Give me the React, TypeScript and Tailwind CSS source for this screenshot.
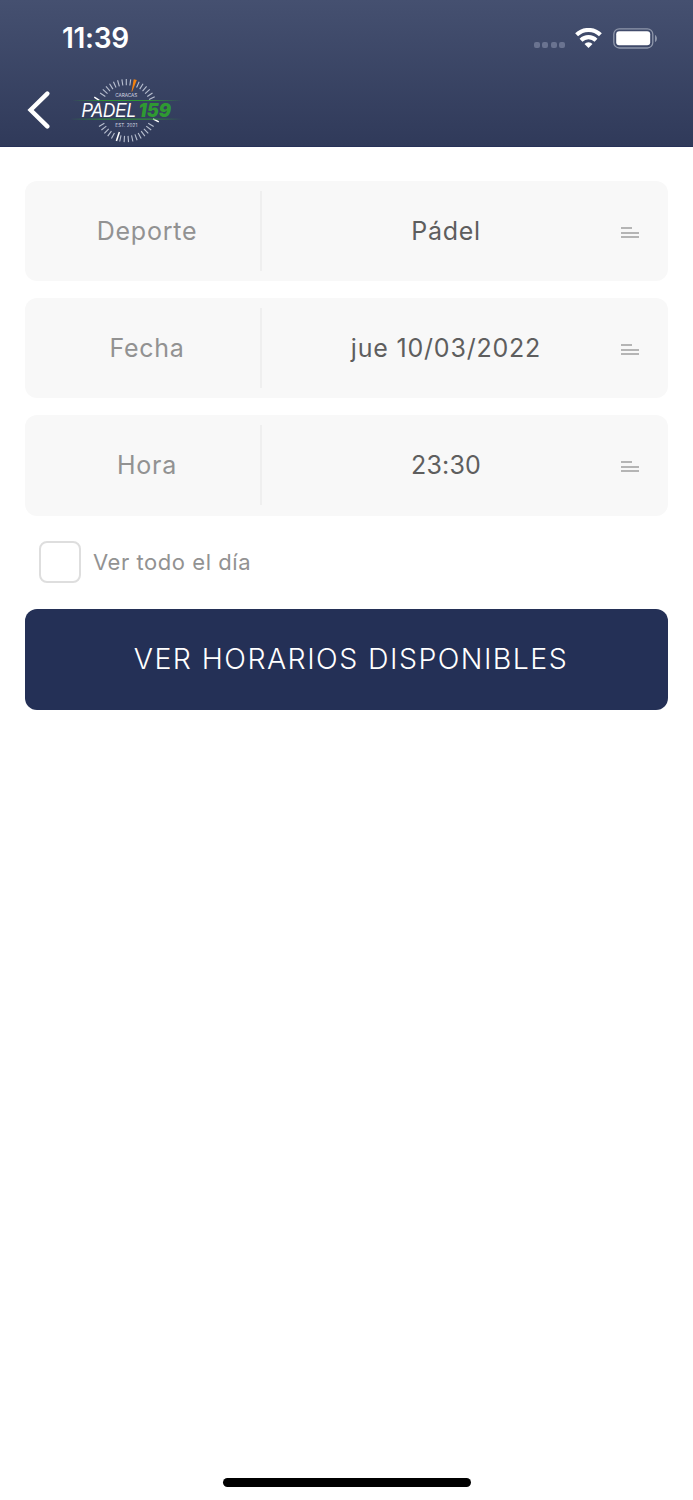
import React from 'react';

const fields = [
    { label: 'Deporte', value: 'Pádel', labelClass: 'tracking-[0.75px]', valueClass: 'tracking-[0.7px]' },
    { label: 'Fecha', value: 'jue 10/03/2022', labelClass: 'tracking-[0.75px]', valueClass: 'tracking-[0.8px]' },
    { label: 'Hora', value: '23:30', labelClass: 'tracking-[0.75px]', valueClass: 'tracking-[0.2px]' },
];

// dial marks every 8 degrees, the band behind the name is left free
const ticks = Array.from({ length: 45 }, (_, i) => i * 8).filter((a) => a !== 16 && (a <= 64 || (a >= 120 && a <= 240 && a !== 200) || a >= 300));

const Logo: React.FC = () => (
    <svg width="112" height="68" viewBox="70 77 112 68" className="ml-[20px] mt-[1px]">
        <defs>
            <linearGradient id="line" x1="0" x2="1">
                <stop offset="0" stopColor="#2f9a32" stopOpacity="0" />
                <stop offset="0.3" stopColor="#2f9a32" />
                <stop offset="0.7" stopColor="#2f9a32" />
                <stop offset="1" stopColor="#2f9a32" stopOpacity="0" />
            </linearGradient>
        </defs>
        {ticks.map((a) => (
            <line key={a} x1="126.3" y1="79" x2="126.3" y2="85.3" stroke="#b9c0d0" strokeWidth="1.1" transform={`rotate(${a} 126.3 110.6)`} />
        ))}
        <path d="M124.8 78.3h3.2l-1.3 12.7h-.6z" fill="#f5820f" transform="rotate(16 126.3 110.6)" />
        <path d="M126.3 142.6v-9.5" stroke="#fff" strokeWidth="1.5" transform="rotate(18 126.3 110.6)" />
        <path d="M94.3 97.2l5 3.1M153 118.8l5.8 3" stroke="#fff" strokeWidth="1.5" />
        <rect x="72" y="100" width="110" height="1" fill="url(#line)" />
        <rect x="70" y="118.6" width="112" height="1" fill="url(#line)" />
        <text x="126.3" y="97.3" fontSize="4.7" fill="#d5d9e3" textAnchor="middle" textLength="22" fontFamily="Inter, sans-serif">CARACAS</text>
        <text x="126.3" y="127" fontSize="4.7" fill="#d5d9e3" textAnchor="middle" textLength="22" fontFamily="Inter, sans-serif">EST. 2021</text>
        <text x="81.5" y="116.8" fontSize="19.5" fill="#fff" fontStyle="italic" textLength="54.5" lengthAdjust="spacingAndGlyphs" fontFamily="Liberation Sans, sans-serif">PADEL</text>
        <text x="138.5" y="116.8" fontSize="19" fontWeight="900" fill="#2f9a32" fontStyle="italic" textLength="32.5" lengthAdjust="spacingAndGlyphs" fontFamily="Inter, sans-serif">159</text>
    </svg>
);

const StatusBar: React.FC = () => (
    <div className="h-[76px] flex items-center justify-between pl-[62px] pr-[35px]">
        <span className="text-[28px] leading-none font-semibold tracking-[-0.3px]">11:39</span>
        <div className="flex items-center">
            <div className="flex gap-[2.5px] mt-[14px] mr-[10px]">
                {[0, 1, 2, 3].map((i) => (
                    <span key={i} className="w-[6px] h-[6px] rounded-[2px] bg-[#6a7390]" />
                ))}
            </div>
            <svg width="27" height="21" viewBox="0 0 27 21" fill="none" stroke="#fff" strokeWidth="4.1">
                <path d="M1.6 6.8a17 17 0 0 1 23.8 0" />
                <path d="M6 12.2a10.6 10.6 0 0 1 15 0" />
                <path d="M13.5 19.9l-4-4a5.7 5.7 0 0 1 8 0z" fill="#fff" stroke="none" />
            </svg>
            <svg width="45" height="21" viewBox="0 0 45 21" className="ml-[11px]">
                <rect x="0.8" y="0.8" width="39" height="19.2" rx="5.5" fill="none" stroke="#8f97ab" strokeWidth="1.3" />
                <rect x="3.2" y="3.3" width="34" height="14" rx="3" fill="#fff" />
                <path d="M42 7c2.6 1 2.6 6 0 7z" fill="#8f97ab" />
            </svg>
        </div>
    </div>
);

const App: React.FC = () => {
    return (
        <div className="h-[1500px] flex flex-col bg-white font-['Inter',sans-serif]">
            <header className="h-[147.4px] bg-linear-to-b from-[#455070] to-[#303a5a] text-white border-b border-[#273158]">
                <StatusBar />
                <div className="flex items-start pl-[26px]">
                    <svg width="24" height="38" viewBox="0 0 24 38" fill="none" stroke="#fff" strokeWidth="4.4" strokeLinecap="round" strokeLinejoin="miter" className="mt-[15px]">
                        <path d="M21.3 2.6L4.6 19l16.7 16.4" />
                    </svg>
                    <Logo />
                </div>
            </header>

            <main className="pt-[33.6px] px-[25px] flex-1">
                <div className="flex flex-col gap-[17px]">
                    {fields.map((field) => (
                        <div key={field.label} className="h-[100.2px] bg-[#f8f8f8] rounded-xl flex items-center text-[25px] leading-none">
                            <div className={`w-[235px] text-center pl-[9px] text-[#929292] ${field.labelClass}`}>{field.label}</div>
                            <div className="w-[2px] h-[80px] bg-[#efefef]" />
                            <div className={`w-[359px] text-center pl-[9px] text-[#5e5e5e] ${field.valueClass}`}>{field.value}</div>
                            <div className="flex flex-col gap-[2.5px] mt-[3px]">
                                <span className="w-[11px] h-[2px] bg-[#b5b5b5]" />
                                <span className="w-[18px] h-[2px] bg-[#b5b5b5]" />
                                <span className="w-[18px] h-[2px] bg-[#b5b5b5]" />
                            </div>
                        </div>
                    ))}
                </div>

                <label className="flex items-center mt-[25.5px] ml-[13.5px]">
                    <span className="w-[42px] h-[42px] rounded-lg border-2 border-[#dedede]" />
                    <span className="ml-[12.5px] text-[22px] leading-none tracking-[0.55px] text-[#929292]">Ver todo el día</span>
                </label>

                <button className="mt-[26px] w-full h-[101px] rounded-xl bg-[#243056] text-white text-[28.5px] leading-none font-light pl-[9px] pb-px tracking-[1.45px]">
                    VER HORARIOS DISPONIBLES
                </button>
            </main>

            <div className="mx-auto mb-[13px] w-[248px] h-[9px] rounded-full bg-black" />
        </div>
    );
};

export default App;
